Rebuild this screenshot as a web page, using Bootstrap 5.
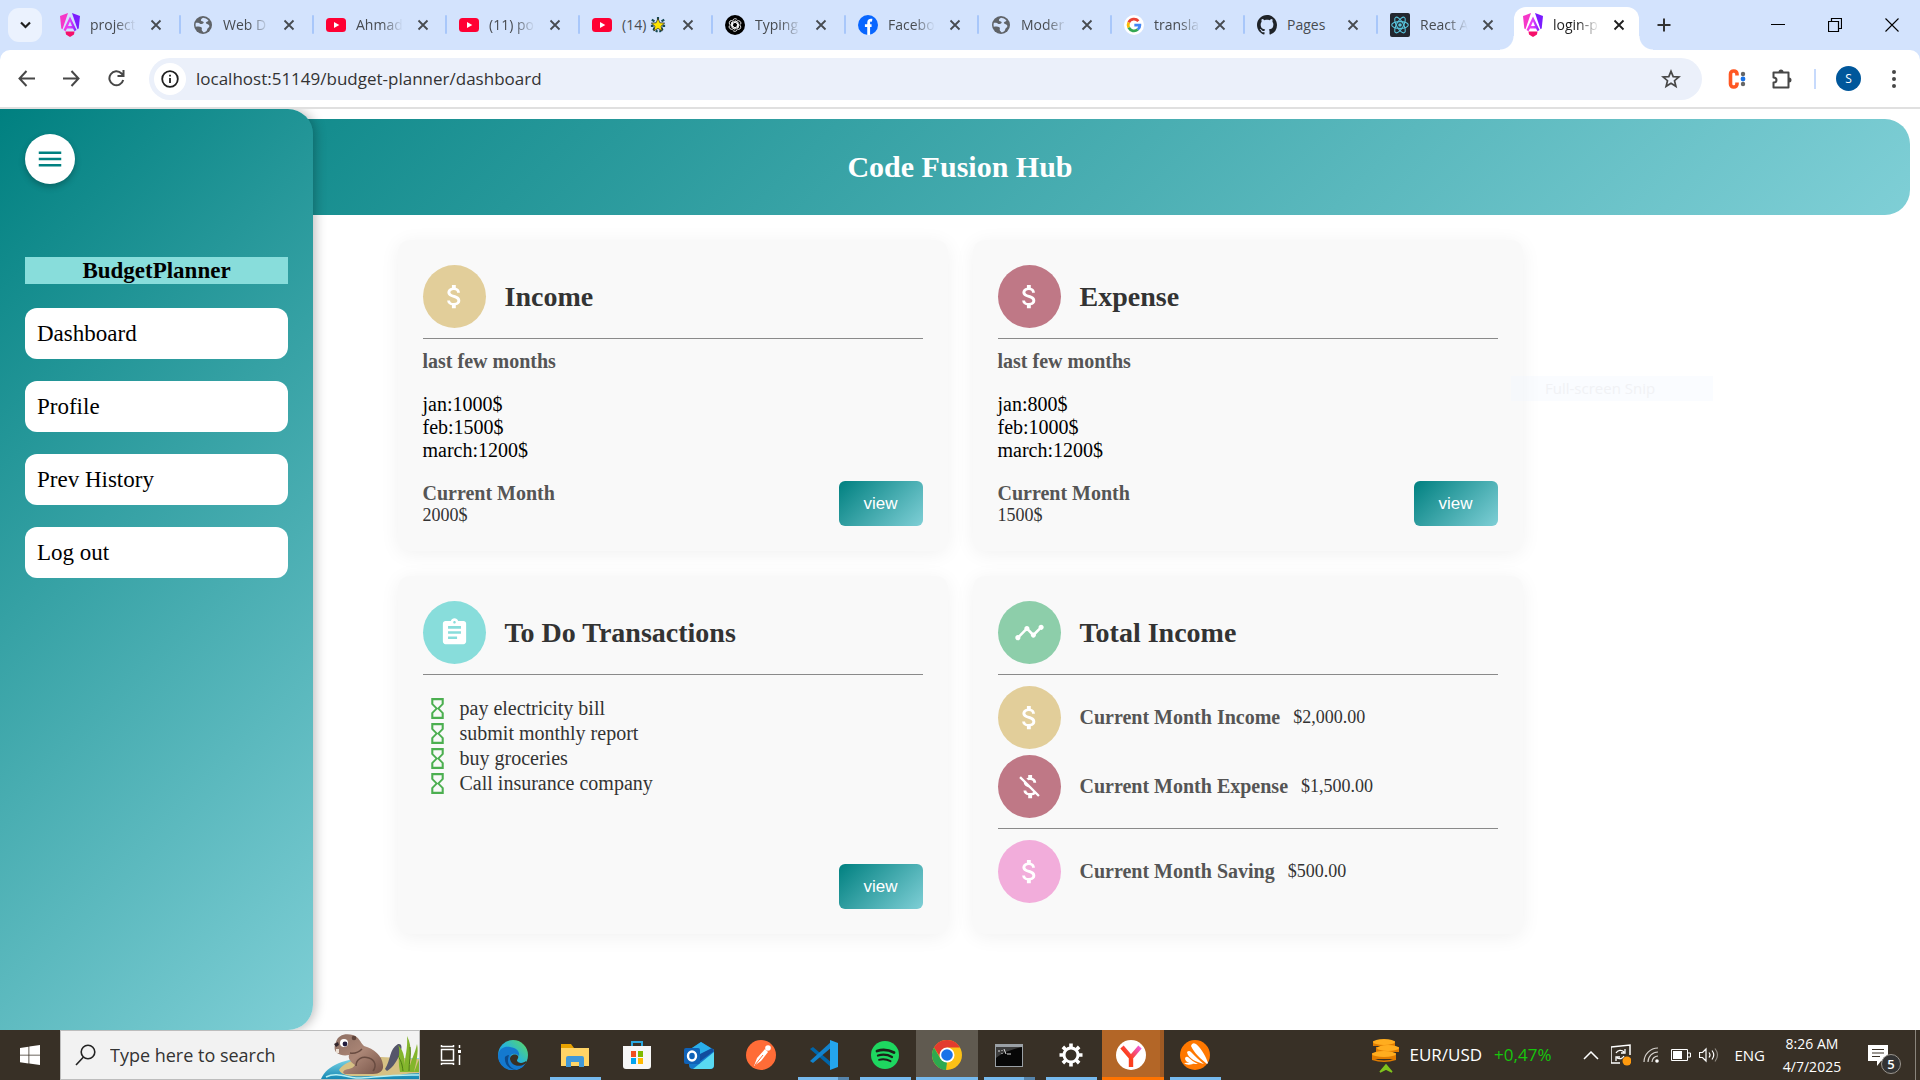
<!DOCTYPE html>
<html lang="en">
<head>
<meta charset="utf-8">
<meta name="viewport" content="width=device-width, initial-scale=1">
<title>Budget Planner dashboard</title>
<link href="https://cdn.jsdelivr.net/npm/bootstrap@5.3.0/dist/css/bootstrap.min.css" rel="stylesheet">
<style>
:root { --ui: "Open Sans", "Noto Sans", sans-serif; --page: "Liberation Serif", "Times New Roman", serif; --teal: linear-gradient(135deg, #008080, #7fcfd6); }
body { font-family: var(--ui); color: #333; background: #fff; min-height: 100vh; }
svg { display: block; flex: none; }
button { font-family: inherit; }
.plain { background: none; border: 0; padding: 0; display: flex; align-items: center; justify-content: center; color: inherit; flex: none; }

/* browser tab strip */
.tabstrip { background: #d3e3fd; height: 50px; }
.tabsearch { width: 34px; height: 34px; border-radius: 11px; background: #ebf2fe; margin: 0 5px 0 8px; align-self: flex-start; margin-top: 8px; }
.tab-item { width: 133px; height: 50px; padding: 0 14px 0 13px; gap: 10px; position: relative; color: #474b50; }
.tab-item::after { content: ""; position: absolute; right: -1px; top: 15px; width: 2px; height: 19px; background: #a8c7fa; border-radius: 1px; }
.tab-item.no-rule::after { display: none; }
.tab-item a { font-size: 14px; line-height: 20px; color: inherit; text-decoration: none; flex: 1 1 0; white-space: nowrap; display: flex; align-items: center; -webkit-mask-image: linear-gradient(90deg, #000 55%, transparent); mask-image: linear-gradient(90deg, #000 55%, transparent); }
.tab-item a.whole { -webkit-mask-image: none; mask-image: none; }
.tab-item .plain { width: 20px; height: 20px; }
.tab-item.current { color: #1f1f1f; }
.tab-item.current > * { z-index: 1; }
.tab-item.current::before { content: ""; position: absolute; left: 4px; right: 4px; top: 7px; bottom: 0; background: #fff; border-radius: 12px 12px 0 0; }
.tab-item.current::after { display: block; left: -10px; right: -10px; width: auto; top: 36px; height: 14px; border-radius: 0; background: radial-gradient(circle at 0 0, transparent 13px, #fff 14px) left / 14px 14px no-repeat, radial-gradient(circle at 100% 0, transparent 13px, #fff 14px) right / 14px 14px no-repeat; z-index: 0; }
.wincontrols .plain { width: 57px; height: 50px; color: #000; }

/* browser toolbar */
.toolbar-wrap { background: #d3e3fd; }
.toolbar { height: 59px; background: #fff; border-radius: 10px 10px 0 0; border-bottom: 2px solid #e0e0e0; color: #474747; }
.toolbar .plain { width: 45px; height: 36px; }
.omnibox { background: #ebf0fa; height: 42px; border-radius: 21px; padding: 0 20px 0 5px; margin-left: 10px; }
.omnibox input { background: none; border: 0; outline: 0; font-size: 17px; color: #333; padding: 0; }
.omnibox .site-info { width: 32px; height: 32px; border-radius: 50%; background: #fff; margin-right: 10px; }
.omnibox .star-btn { width: 22px; }
.tool-rule { margin: 0 10px; }
.avatar { width: 25px; height: 25px; border-radius: 50%; background: #00579b; color: #fff; font-size: 12px; }

/* page */
.app-grid { display: grid; grid-template-columns: 313px 1fr; grid-template-rows: auto 1fr; font-family: var(--page); position: relative; overflow: hidden; }
.side-panel { grid-column: 1; grid-row: 1 / 3; z-index: 2; background: var(--teal); border-radius: 0 25px 25px 0; padding: 25px; box-shadow: 2px 0 12px rgba(0,0,0,.28); }
.menu-btn { width: 50px; height: 50px; border-radius: 50%; background: #fff; color: #008080; box-shadow: 0 3px 6px rgba(0,0,0,.25); margin-bottom: 73px; }
.side-title { background: #88dddb; color: #000; font-size: 23px; line-height: 27px; font-weight: 700; text-align: center; margin: 0 0 24px; }
.side-link { display: block; background: #fff; border-radius: 12px; color: #000; font-size: 23px; line-height: 27px; padding: 12px; margin-bottom: 22px; text-decoration: none; }
.banner { grid-column: 1 / 3; grid-row: 1; margin: 10px 10px 0; height: 96px; background: var(--teal); border-radius: 25px; color: #fff; }
.banner h1 { font-size: 30px; line-height: 36px; font-weight: 700; margin: 0; }
.board { grid-column: 1 / 3; grid-row: 2; width: 100%; max-width: 1125px; margin: 25px auto; }
.board .row { --bs-gutter-x: 25px; --bs-gutter-y: 25px; }
.panel { background: #f9f9f9; border: 0; border-radius: 12px; padding: 25px; box-shadow: 0 3px 20px rgba(0,0,0,.06); color: #333; }
.panel-head { gap: 19px; }
.panel h2 { font-size: 28px; line-height: 32px; font-weight: 700; margin: 0; }
.panel h3 { font-size: 20px; line-height: 23px; font-weight: 700; margin: 0; color: #555; }
.panel hr { margin: 10px 0 11px; border-top: 1px solid #8a8a8a; opacity: 1; }
.disc { width: 63px; height: 63px; border-radius: 50%; color: #fff; flex: none; }
.gold { background: #e2ce9a; } .rose { background: #bf7886; } .aqua { background: #88dddb; } .leaf { background: #8dceaa; } .pink { background: #f2addb; }
.months { font-size: 20px; line-height: 23px; color: #000; margin: 20px 0 19px; }
.amount { font-size: 18px; line-height: 21px; }
.btn-view { background: var(--teal); color: #fff; border: 0; border-radius: 6px; width: 84px; height: 45px; padding: 0; font: 17px/20px "Liberation Sans", Arial, sans-serif; }
.btn-view:hover { color: #fff; }
.todo { font-size: 20px; line-height: 25px; margin: 21px 0 0; padding-left: 2px; }
.todo li { gap: 10px; }
.todo svg { color: #4caf50; }
.sum-row { gap: 19px; margin-bottom: 6px; }
.sum-row .figures { gap: 13px; }
.ghost-menu { position: absolute; right: 207px; top: 267px; width: 202px; height: 25px; background: rgba(240,245,255,.3); color: #f1f2f5; font: 15px/25px var(--ui); padding-left: 34px; z-index: 3; }

/* taskbar */
.taskbar { height: 50px; background: #383026; color: #fff; }
.taskbar .start { width: 60px; height: 50px; }
.find { width: 360px; background: #f2f2f2; border: 1px solid #bdbdbd; padding-left: 14px; gap: 13px; overflow: hidden; }
.find input { width: 180px; background: none; border: 0; outline: 0; padding: 0; font-size: 18px; color: #333; }
.find input::placeholder { color: #333; opacity: 1; }
.task { width: 62px; height: 50px; position: relative; }
.task.open::after { content: ""; position: absolute; left: 6px; right: 5px; bottom: 0; height: 3px; background: #76b9ed; }
.task.multi::after { background: linear-gradient(90deg, #76b9ed 40px, #5684ab 40px); }
.task.live { background: #605a50; } .task.live::after { left: 0; right: 0; }
.task.alert-app { background: #b36627; border-right: 4px solid #9e5a24; } .task.alert-app::after { left: 0; right: -4px; background: #ff7300; }
.tray { font-size: 17px; line-height: 20px; padding-right: 4px; }
.tray .up { color: #16c60c; }
.tray .plain { height: 50px; }
.lang { font-size: 15px; margin-left: 14px; }
.clock { font-size: 14px; line-height: 23px; width: 74px; text-align: center; }
.tray .notify { width: 68px; padding-right: 6px; position: relative; }
.notify-count { position: absolute; left: 34px; top: 24px; width: 20px; height: 20px; border-radius: 50%; border: 1px solid #9a958e; background: #333; font-size: 13px; line-height: 18px; font-weight: 600; }
.peek { width: 1px; height: 50px; background: #8a857c; }
</style>
<script src="https://cdn.jsdelivr.net/npm/bootstrap@5.3.0/dist/js/bootstrap.bundle.min.js"></script>
</head>
<body class="d-flex flex-column">

<svg width="0" height="0" class="position-absolute" aria-hidden="true">
  <defs>
    <linearGradient id="ngA" x1="0" y1="0" x2="1" y2="0"><stop offset="0" stop-color="#f637e3"/><stop offset=".5" stop-color="#e040fb"/><stop offset="1" stop-color="#7b1cff"/></linearGradient>
    <linearGradient id="edgeA" x1="0" y1="1" x2="1" y2="0"><stop offset="0" stop-color="#0f6fd0"/><stop offset=".5" stop-color="#26b4dc"/><stop offset="1" stop-color="#5fdc5a"/></linearGradient>
    <linearGradient id="water" x1="0" y1="0" x2="0" y2="1"><stop offset="0" stop-color="#7fd8e8"/><stop offset="1" stop-color="#1588b4"/></linearGradient>
    <linearGradient id="fur" x1="0" y1="0" x2="1" y2="1"><stop offset="0" stop-color="#8d6f63"/><stop offset=".5" stop-color="#ab8676"/><stop offset="1" stop-color="#765347"/></linearGradient>
    <linearGradient id="yandex" x1="0" y1="1" x2="1" y2="0"><stop offset=".45" stop-color="#fc3f1d"/><stop offset="1" stop-color="#f05ad8"/></linearGradient>
    <symbol id="i-x" viewBox="0 0 12 12"><path d="M1.5 1.5l9 9m0-9l-9 9" stroke="currentColor" stroke-width="1.8" fill="none"/></symbol>
    <symbol id="i-angular" viewBox="0 0 20 24"><path d="M8 0L0 3l1.300 12.500 1.200.7z" fill="#f637c8"/><path d="M12 0l8 3-1.300 12.500-1.200.7z" fill="#7b1cff"/><path d="M10 3.500L3.500 17l2 1.200L7 15.500h6l1.500 2.700 2-1.200zM10 8.500l2 4.500H8z" fill="url(#ngA)"/><path d="M5.500 18.500h9l-.5 3L10 24l-4-2.500z" fill="#f5106b"/></symbol>
    <symbol id="i-globe" viewBox="0 0 24 24"><circle cx="12" cy="12" r="10.800" fill="#5f6368"/><path d="M12 3.200c-1 1.200-2.700 1.300-2.500 3 .2 1.800 2.500.8 3.200 2.200.6 1.300-.8 2.300-2.400 2.400-2 .2-2.300-1.600-4.300-1.600H3.400A9 9 0 0 0 3.300 14c2.600-.3 5.200-.5 6.700.6 1.600 1.200-.2 2.600.7 4 .5.800 1.300 1 1.500 2.200 3.800-.2 4.500-2.200 5-4 .5-1.600 2-1.400 2.400-3 .4-1.800-1.500-2.800-3.200-3.300-1.500-.4-1.300-2 .2-2.400 1-.3 1.700-.2 1.800-1.700A9 9 0 0 0 12 3.200z" fill="#d3e3fd"/></symbol>
    <symbol id="i-yt" viewBox="0 0 20 14"><rect width="20" height="14" rx="3.500" fill="#f03"/><path d="M8 4l5.300 3L8 10z" fill="#fff"/></symbol>
    <symbol id="i-gpt" viewBox="0 0 24 24"><circle cx="12" cy="12" r="12" fill="#000"/><g fill="none" stroke="#fff" stroke-width="1"><g id="gp"><path d="M9.200 12V7.500a3 3 0 0 1 5.600-1.600M9.200 10.200l4-2.300 3.800 2.200"/></g><use href="#gp" transform="rotate(60 12 12)"/><use href="#gp" transform="rotate(120 12 12)"/><use href="#gp" transform="rotate(180 12 12)"/><use href="#gp" transform="rotate(240 12 12)"/><use href="#gp" transform="rotate(300 12 12)"/></g></symbol>
    <symbol id="i-fb" viewBox="0 0 24 24"><circle cx="12" cy="12" r="12" fill="#0866ff"/><path d="M17 6.300c-3.200-.6-4.200.6-4.200 3V24M8.300 12.800h8" fill="none" stroke="#fff" stroke-width="3.400"/></symbol>
    <symbol id="i-google" viewBox="0 0 24 24"><circle cx="12" cy="12" r="12" fill="#fff"/><g fill="none" stroke-width="3.400"><path d="M17.300 7.300A7 7 0 0 0 5.700 9" stroke="#ea4335"/><path d="M5.700 9a7 7 0 0 0 0 6.200" stroke="#fbbc05"/><path d="M5.700 15.200a7 7 0 0 0 10.800 2.200" stroke="#34a853"/><path d="M16.500 17.400A6.500 6.500 0 0 0 19 12.200h-6.600" stroke="#4285f4"/></g></symbol>
    <symbol id="i-github" viewBox="0 0 16 16"><path fill="#1f2328" d="M8 0C3.580 0 0 3.580 0 8c0 3.540 2.290 6.530 5.470 7.590.4.070.55-.17.55-.38 0-.19-.01-.82-.01-1.490-2.010.37-2.530-.49-2.690-.94-.09-.23-.48-.94-.82-1.130-.28-.15-.68-.52-.01-.53.63-.01 1.080.58 1.230.82.72 1.210 1.870.87 2.330.66.070-.52.280-.87.510-1.070-1.780-.2-3.640-.89-3.640-3.950 0-.87.310-1.590.820-2.150-.08-.2-.36-1.020.080-2.120 0 0 .67-.21 2.200.82.640-.18 1.320-.27 2-.27.680 0 1.360.090 2 .27 1.530-1.040 2.200-.82 2.200-.82.440 1.100.16 1.920.080 2.120.510.560.820 1.270.820 2.150 0 3.070-1.870 3.750-3.650 3.950.290.250.540.730.540 1.480 0 1.070-.01 1.930-.01 2.200 0 .21.150.46.550.38A8.012 8.012 0 0 0 16 8c0-4.420-3.580-8-8-8z"/></symbol>
    <symbol id="i-react" viewBox="0 0 20 24"><rect width="20" height="24" rx="2" fill="#23272f"/><g fill="none" stroke="#58c4dc" stroke-width="1.100"><ellipse cx="10" cy="12" rx="8.300" ry="3.400"/><ellipse cx="10" cy="12" rx="8.800" ry="3.400" transform="rotate(60 10 12)"/><ellipse cx="10" cy="12" rx="8.800" ry="3.400" transform="rotate(120 10 12)"/></g><circle cx="10" cy="12" r="1.800" fill="#58c4dc"/></symbol>
    <symbol id="m-dollar" viewBox="0 0 24 24"><path fill="currentColor" d="M11.8 10.900c-2.270-.59-3-1.200-3-2.150 0-1.090 1.010-1.850 2.700-1.850 1.780 0 2.440.85 2.500 2.100h2.210c-.07-1.720-1.120-3.300-3.210-3.810V3h-3v2.160c-1.940.42-3.500 1.680-3.500 3.610 0 2.310 1.910 3.460 4.700 4.130 2.500.6 3 1.480 3 2.410 0 .69-.49 1.790-2.700 1.790-2.060 0-2.870-.92-2.980-2.100h-2.200c.12 2.190 1.760 3.420 3.680 3.830V21h3v-2.150c1.950-.37 3.500-1.500 3.500-3.550 0-2.840-2.430-3.810-4.700-4.400z"/></symbol>
    <symbol id="m-dollar-off" viewBox="0 0 24 24"><path fill="currentColor" d="M12.500 6.900c1.780 0 2.440.85 2.500 2.100h2.210c-.07-1.720-1.120-3.300-3.210-3.810V3h-3v2.160c-.53.12-1.030.3-1.480.54l1.470 1.470c.41-.17.91-.27 1.510-.27zM5.330 4.060L4.060 5.330 7.500 8.770c0 2.080 1.560 3.210 3.910 3.910l3.510 3.510c-.34.48-1.050.91-2.420.91-2.060 0-2.870-.92-2.980-2.100h-2.200c.12 2.190 1.760 3.420 3.680 3.830V21h3v-2.150c.96-.18 1.820-.55 2.450-1.120l2.220 2.220 1.270-1.270L5.330 4.060z"/></symbol>
    <symbol id="m-clip" viewBox="0 0 24 24"><path fill="currentColor" d="M19 3h-4.180C14.400 1.840 13.300 1 12 1c-1.300 0-2.400.84-2.820 2H5c-1.100 0-2 .9-2 2v14c0 1.100.9 2 2 2h14c1.100 0 2-.9 2-2V5c0-1.100-.9-2-2-2zm-7 0c.55 0 1 .45 1 1s-.45 1-1 1-1-.45-1-1 .45-1 1-1zm2 14H7v-2h7v2zm3-4H7v-2h10v2zm0-4H7V7h10v2z"/></symbol>
    <symbol id="m-line" viewBox="0 0 24 24"><path fill="currentColor" d="M23 8c0 1.100-.9 2-2 2-.18 0-.35-.02-.51-.07l-3.560 3.550c.05.16.07.34.07.52 0 1.100-.9 2-2 2s-2-.9-2-2c0-.18.02-.36.07-.52l-2.550-2.550c-.16.05-.34.07-.52.07s-.36-.02-.52-.07l-4.550 4.560c.05.16.07.33.07.51 0 1.100-.9 2-2 2s-2-.9-2-2 .9-2 2-2c.18 0 .35.02.51.07l4.560-4.550C8.020 9.360 8 9.180 8 9c0-1.100.9-2 2-2s2 .9 2 2c0 .18-.02.36-.07.52l2.550 2.550c.16-.05.34-.07.52-.07s.36.02.52.07l3.550-3.560C19.020 8.350 19 8.180 19 8c0-1.100.9-2 2-2s2 .9 2 2z"/></symbol>
    <symbol id="m-hour" viewBox="0 0 24 24"><path fill="currentColor" d="M6 2v6h.01L6 8.010 10 12l-4 4 .01.01H6V22h12v-5.990h-.01L18 16l-4-4 4-3.990-.01-.01H18V2H6zm10 14.500V20H8v-3.500l4-4 4 4zm-4-5l-4-4V4h8v3.500l-4 4z"/></symbol>
  </defs>
</svg>

<header>
  <nav class="tabstrip d-flex align-items-center" aria-label="Browser tabs">
    <button class="plain tabsearch" aria-label="Search tabs"><svg width="11" height="8" viewBox="0 0 11 8"><path d="M1 1.500l4.500 4.500L10 1.500" fill="none" stroke="#1f1f1f" stroke-width="2.200"/></svg></button>
    <div class="tab-item d-flex align-items-center"><svg width="20" height="24"><use href="#i-angular"/></svg><a href="#">project</a><button class="plain" aria-label="Close tab"><svg width="12" height="12"><use href="#i-x"/></svg></button></div>
    <div class="tab-item d-flex align-items-center"><svg width="20" height="20"><use href="#i-globe"/></svg><a href="#">Web D</a><button class="plain" aria-label="Close tab"><svg width="12" height="12"><use href="#i-x"/></svg></button></div>
    <div class="tab-item d-flex align-items-center"><svg width="20" height="14"><use href="#i-yt"/></svg><a href="#">Ahmad</a><button class="plain" aria-label="Close tab"><svg width="12" height="12"><use href="#i-x"/></svg></button></div>
    <div class="tab-item d-flex align-items-center"><svg width="20" height="14"><use href="#i-yt"/></svg><a href="#">(11) po</a><button class="plain" aria-label="Close tab"><svg width="12" height="12"><use href="#i-x"/></svg></button></div>
    <div class="tab-item d-flex align-items-center"><svg width="20" height="14"><use href="#i-yt"/></svg><a href="#" class="whole">(14)<svg class="ms-1" width="16" height="16" viewBox="0 0 18 18"><path d="M2 3l3 2M16 3l-3 2M1 10h3m10 0h3M9 0v3M4 15l1-3m9 3l-1-3M7 17l1-2m4 2l-1-2" stroke="#154b55" stroke-width="2.400"/><path d="M9 1.500l2.100 5 5.400.4-4.100 3.500 1.300 5.300L9 12.800l-4.700 2.900 1.300-5.300L1.500 6.900l5.400-.4z" fill="#ffe500" stroke="#222" stroke-width=".8"/></svg></a><button class="plain" aria-label="Close tab"><svg width="12" height="12"><use href="#i-x"/></svg></button></div>
    <div class="tab-item d-flex align-items-center"><svg width="20" height="20"><use href="#i-gpt"/></svg><a href="#">Typing</a><button class="plain" aria-label="Close tab"><svg width="12" height="12"><use href="#i-x"/></svg></button></div>
    <div class="tab-item d-flex align-items-center"><svg width="20" height="20"><use href="#i-fb"/></svg><a href="#">Facebo</a><button class="plain" aria-label="Close tab"><svg width="12" height="12"><use href="#i-x"/></svg></button></div>
    <div class="tab-item d-flex align-items-center"><svg width="20" height="20"><use href="#i-globe"/></svg><a href="#">Moder</a><button class="plain" aria-label="Close tab"><svg width="12" height="12"><use href="#i-x"/></svg></button></div>
    <div class="tab-item d-flex align-items-center"><svg width="20" height="20"><use href="#i-google"/></svg><a href="#">transla</a><button class="plain" aria-label="Close tab"><svg width="12" height="12"><use href="#i-x"/></svg></button></div>
    <div class="tab-item d-flex align-items-center"><svg width="20" height="20"><use href="#i-github"/></svg><a href="#" class="whole">Pages</a><button class="plain" aria-label="Close tab"><svg width="12" height="12"><use href="#i-x"/></svg></button></div>
    <div class="tab-item no-rule d-flex align-items-center"><svg width="20" height="24"><use href="#i-react"/></svg><a href="#">React A</a><button class="plain" aria-label="Close tab"><svg width="12" height="12"><use href="#i-x"/></svg></button></div>
    <div class="tab-item current d-flex align-items-center"><svg width="20" height="24"><use href="#i-angular"/></svg><a href="#">login-p</a><button class="plain" aria-label="Close tab"><svg width="12" height="12"><use href="#i-x"/></svg></button></div>
    <button class="plain ms-2" aria-label="New tab"><svg width="26" height="26" viewBox="0 0 26 26"><path d="M13 6.500v13M6.500 13h13" stroke="#333" stroke-width="2"/></svg></button>
    <div class="wincontrols d-flex ms-auto">
      <button class="plain" aria-label="Minimize"><svg width="14" height="14" viewBox="0 0 14 14"><path d="M0 6.500h14" stroke="currentColor"/></svg></button>
      <button class="plain" aria-label="Restore"><svg width="14" height="14" viewBox="0 0 14 14"><path d="M.5 3.500h10v10H.5zM3.500 3V.5h10v10H11" fill="none" stroke="currentColor" stroke-width="1.200"/></svg></button>
      <button class="plain" aria-label="Close"><svg width="14" height="14" viewBox="0 0 14 14"><path d="M.5.5l13 13m0-13l-13 13" stroke="currentColor" stroke-width="1.100"/></svg></button>
    </div>
  </nav>
  <div class="toolbar-wrap">
    <div class="toolbar d-flex align-items-center">
      <div class="d-flex ps-1">
        <button class="plain" aria-label="Back"><svg width="17" height="17" viewBox="0 0 17 17"><path d="M8.500 1L1.500 8.500l7 7.500M1.500 8.500H17" fill="none" stroke="currentColor" stroke-width="2"/></svg></button>
        <button class="plain" aria-label="Forward"><svg width="17" height="17" viewBox="0 0 17 17"><path d="M8.500 1l7 7.500-7 7.500M15.500 8.500H0" fill="none" stroke="currentColor" stroke-width="2"/></svg></button>
        <button class="plain" aria-label="Reload"><svg width="17" height="17" viewBox="0 0 17 17"><path d="M15.200 10A7 7 0 1 1 13.500 3.500L15 5.500M15.500 0v6h-6" fill="none" stroke="currentColor" stroke-width="2"/></svg></button>
      </div>
      <div class="omnibox d-flex align-items-center flex-grow-1">
        <button class="plain site-info" aria-label="Site information"><svg width="18" height="18" viewBox="0 0 18 18"><circle cx="9" cy="9" r="7.800" fill="none" stroke="#1f1f1f" stroke-width="1.800"/><path d="M9 8v5M9 4.800v1.800" stroke="#1f1f1f" stroke-width="1.800"/></svg></button>
        <input class="flex-grow-1" type="text" aria-label="Address" value="localhost:51149/budget-planner/dashboard">
        <button class="plain star-btn" aria-label="Bookmark"><svg width="20" height="20" viewBox="0 0 20 20"><path d="M10 2.300l2.200 5.300 5.700.4-4.400 3.700 1.400 5.600L10 14.200l-4.900 3.100 1.400-5.600L2.100 8l5.700-.4z" fill="none" stroke="currentColor" stroke-width="1.700"/></svg></button>
      </div>
      <div class="d-flex align-items-center ps-2 pe-1 ms-1">
        <button class="plain" aria-label="Extension"><svg width="20" height="20" viewBox="0 0 20 20"><path d="M10 6.500V5a3 3 0 0 0-3-3h-.5a3 3 0 0 0-3 3v10a3 3 0 0 0 3 3H7a3 3 0 0 0 3-3v-1.500" fill="none" stroke="#ff5722" stroke-width="3.600"/><circle cx="16" cy="5" r="2.200" fill="#666"/><circle cx="16" cy="10" r="2.400" fill="#1a73e8"/><circle cx="16" cy="15" r="2.200" fill="#666"/></svg></button>
        <button class="plain" aria-label="Extensions"><svg width="22" height="22" viewBox="0 0 22 22"><path d="M2.500 4.500h15v15h-15v-5c2 0 3-1 3-2.500s-1-2.500-3-2.500z" fill="none" stroke="currentColor" stroke-width="2" stroke-linejoin="round"/><path d="M7.500 4a2.500 2.500 0 0 1 5 0zM18 9.500a2.500 2.500 0 0 1 0 5z" fill="currentColor"/></svg></button>
        <svg class="tool-rule" width="2" height="20"><rect width="2" height="20" fill="#c7dafc"/></svg>
        <button class="plain" aria-label="Profile"><span class="avatar d-flex align-items-center justify-content-center">S</span></button>
        <button class="plain" aria-label="Menu"><svg width="4" height="18" viewBox="0 0 4 18"><g fill="currentColor"><circle cx="2" cy="2" r="2"/><circle cx="2" cy="9" r="2"/><circle cx="2" cy="16" r="2"/></g></svg></button>
      </div>
    </div>
  </div>
</header>

<main class="app-grid flex-grow-1">
  <aside class="side-panel">
    <button class="plain menu-btn" aria-label="Toggle menu"><svg width="30" height="30" viewBox="0 0 24 24"><path fill="currentColor" d="M3 18h18v-2H3v2zm0-5h18v-2H3v2zm0-7v2h18V6H3z"/></svg></button>
    <h3 class="side-title">BudgetPlanner</h3>
    <nav>
      <a class="side-link" href="#">Dashboard</a>
      <a class="side-link" href="#">Profile</a>
      <a class="side-link" href="#">Prev History</a>
      <a class="side-link" href="#">Log out</a>
    </nav>
  </aside>
  <div class="banner d-flex align-items-center justify-content-center"><h1>Code Fusion Hub</h1></div>
  <div class="board">
    <div class="row row-cols-2">
      <div class="col">
        <section class="card panel h-100">
          <div class="panel-head d-flex align-items-center"><span class="disc gold d-flex align-items-center justify-content-center"><svg width="31" height="31"><use href="#m-dollar"/></svg></span><h2>Income</h2></div>
          <hr>
          <h3>last few months</h3>
          <div class="months">jan:1000$<br>feb:1500$<br>march:1200$</div>
          <div class="d-flex justify-content-between align-items-end mt-auto"><div><h3>Current Month</h3><div class="amount">2000$</div></div><button class="btn btn-view">view</button></div>
        </section>
      </div>
      <div class="col">
        <section class="card panel h-100">
          <div class="panel-head d-flex align-items-center"><span class="disc rose d-flex align-items-center justify-content-center"><svg width="31" height="31"><use href="#m-dollar"/></svg></span><h2>Expense</h2></div>
          <hr>
          <h3>last few months</h3>
          <div class="months">jan:800$<br>feb:1000$<br>march:1200$</div>
          <div class="d-flex justify-content-between align-items-end mt-auto"><div><h3>Current Month</h3><div class="amount">1500$</div></div><button class="btn btn-view">view</button></div>
        </section>
      </div>
      <div class="col">
        <section class="card panel h-100">
          <div class="panel-head d-flex align-items-center"><span class="disc aqua d-flex align-items-center justify-content-center"><svg width="31" height="31"><use href="#m-clip"/></svg></span><h2>To Do Transactions</h2></div>
          <hr class="mb-0">
          <ul class="todo list-unstyled">
            <li class="d-flex"><svg width="25" height="25"><use href="#m-hour"/></svg>pay electricity bill</li>
            <li class="d-flex"><svg width="25" height="25"><use href="#m-hour"/></svg>submit monthly report</li>
            <li class="d-flex"><svg width="25" height="25"><use href="#m-hour"/></svg>buy groceries</li>
            <li class="d-flex"><svg width="25" height="25"><use href="#m-hour"/></svg>Call insurance company</li>
          </ul>
          <button class="btn btn-view mt-auto ms-auto">view</button>
        </section>
      </div>
      <div class="col">
        <section class="card panel h-100 d-block">
          <div class="panel-head d-flex align-items-center"><span class="disc leaf d-flex align-items-center justify-content-center"><svg width="31" height="31"><use href="#m-line"/></svg></span><h2>Total Income</h2></div>
          <hr>
          <div class="sum-row d-flex align-items-center"><span class="disc gold d-flex align-items-center justify-content-center"><svg width="31" height="31"><use href="#m-dollar"/></svg></span><div class="figures d-flex align-items-center"><h3>Current Month Income</h3><span class="amount">$2,000.00</span></div></div>
          <div class="sum-row d-flex align-items-center"><span class="disc rose d-flex align-items-center justify-content-center"><svg width="31" height="31"><use href="#m-dollar-off"/></svg></span><div class="figures d-flex align-items-center"><h3>Current Month Expense</h3><span class="amount">$1,500.00</span></div></div>
          <hr>
          <div class="sum-row d-flex align-items-center"><span class="disc pink d-flex align-items-center justify-content-center"><svg width="31" height="31"><use href="#m-dollar"/></svg></span><div class="figures d-flex align-items-center"><h3>Current Month Saving</h3><span class="amount">$500.00</span></div></div>
        </section>
      </div>
    </div>
  </div>
  <div class="ghost-menu">Full-screen Snip</div>
</main>

<footer class="taskbar d-flex align-items-stretch">
  <button class="plain start" aria-label="Start"><svg width="20" height="20" viewBox="0 0 20 20"><path fill="#fff" d="M0 3l8.500-1.300v8H0zM9.300 1.500L20 0v9.700H9.300zM0 10.400h8.500v8L0 17.200zM9.300 10.400H20V20L9.300 18.500z"/></svg></button>
  <div class="find d-flex align-items-center">
    <svg width="22" height="22" viewBox="0 0 22 22"><circle cx="13" cy="8" r="6.800" fill="none" stroke="#222" stroke-width="1.600"/><path d="M8.500 13L1 21" stroke="#222" stroke-width="1.600"/></svg>
    <input type="text" aria-label="Search" placeholder="Type here to search">
    <svg class="ms-auto" width="98" height="48" viewBox="0 0 98 48">
      <path d="M0 48C6 34 24 27 50 27h48v21z" fill="url(#water)"/>
      <path d="M18 39C22 31 40 25 60 26l38 2v14c-16 0-20 4-40 3-22 0-36 2-40-6z" fill="#d6c184"/>
      <path d="M64 38c6-9 4-20 13-25 5-1 4 6 1 12-3 7-8 13-12 15z" fill="#55566a"/>
      <path d="M15 11C17 4 24 2 32 4c6 2 7 7 11 11 10 3 18 9 19 19 1 6-4 9-10 9H24c-4-1-1-5 4-5 3-1 5-2 6-4-5-3-7-7-6-10-5 1-9 0-12-2-3-2-3-7-1-11z" fill="url(#fur)"/>
      <path d="M29 22c6 1 9-1 12-4M35 35c0-7 6-10 13-8 6 2 8 8 4 13" fill="none" stroke="#684b40" stroke-width="1.500"/>
      <path d="M15 18h3v4h-3z" fill="#ede1d5"/>
      <circle cx="23" cy="12" r="4" fill="#fff"/><circle cx="24" cy="13" r="2.400" fill="#211b3c"/><circle cx="33" cy="7" r="2.300" fill="#5e443b"/><path d="M13 13l4-2 1 3-3 2z" fill="#33262c"/>
      <path d="M79 41C76 26 80 20 77 14c7 7 7 16 6 24 1-13 4-21 3-33 6 11 3 24 2 34 2-11 6-16 8-26 2 8-1 19-3 28 2-4 3-9 5-12v12H79z" fill="#83b52c"/>
      <path d="M82 40c-1-8-2-10-5-15M88 40c0-9 2-16 1-24" stroke="#4f7c15" fill="none"/>
      <path d="M5 46c10-5 20 0 30 1s30-4 63-3" fill="none" stroke="#b6f0f4" stroke-width="1.500"/>
    </svg>
  </div>
  <button class="plain task" aria-label="Task view"><svg width="22" height="24" viewBox="0 0 22 24"><g fill="none" stroke="#fff" stroke-width="1.500"><path d="M1.500 6.500h12v11h-12zM1.500 2v1.500h12V2M1.500 22v-1.500h12V22M19.500 2v3M19.500 12v10"/></g><rect x="18" y="7" width="3" height="3" fill="#fff"/></svg></button>
  <button class="plain task" aria-label="Edge"><svg width="30" height="30" viewBox="0 0 30 30"><circle cx="15" cy="15" r="15" fill="url(#edgeA)"/><path d="M0 16C1 8 7 6 12 7c7 1 10 5 9 9-4-4-10-2-9 3 1 6 9 8 16 4A15 15 0 0 1 0 16z" fill="#1479cf"/><path d="M12 19c0-4 5-6 8-3 1 2-1 3-1 5 2 3 7 2 9 0 1 1 0 2-1 3-7 4-14 1-15-5z" fill="#383026"/><path d="M7 17c-1 7 4 13 12 13-7-1-11-7-8-15-2 0-3 1-4 2z" fill="#0c4a8c"/></svg></button>
  <button class="plain task open" aria-label="File Explorer"><svg width="28" height="24" viewBox="0 0 28 24"><path d="M0 1h10l3 4h14v6H0z" fill="#e8a200"/><path d="M0 5h28v18H0z" fill="#ffd466"/><path d="M5 24v-9q0-2 2-2h14q2 0 2 2v9h-5v-5h-8v5z" fill="#4098d8"/></svg></button>
  <button class="plain task" aria-label="Microsoft Store"><svg width="30" height="30" viewBox="0 0 30 30"><path d="M10 7V2h10v5" fill="none" stroke="#29a8e0" stroke-width="2"/><path d="M1 6h28v20q0 3-3 3H4q-3 0-3-3z" fill="#f7f7f7"/><path d="M9 11h5v6H9z" fill="#f25022"/><path d="M16 11h5v6h-5z" fill="#7fba00"/><path d="M9 18h5v6H9z" fill="#00a4ef"/><path d="M16 18h5v6h-5z" fill="#ffb900"/></svg></button>
  <button class="plain task" aria-label="Outlook"><svg width="30" height="28" viewBox="0 0 30 28"><path d="M5 9L17 1l13 8v15q0 4-4 4H9q-4 0-4-4z" fill="#1479cc"/><path d="M5 9L17 1l13 8-14 10z" fill="#2aaeea"/><path d="M30 11v13q0 4-4 4H9z" fill="#59d9f2"/><path d="M14 14L28 7l2 3-15 11z" fill="#114c9e"/><rect y="7" width="16" height="16" rx="2" fill="#0f62b8"/><ellipse cx="8" cy="15" rx="4" ry="4.500" fill="none" stroke="#fff" stroke-width="2.400"/></svg></button>
  <button class="plain task" aria-label="Postman"><svg width="30" height="30" viewBox="0 0 30 30"><circle cx="15" cy="15" r="15" fill="#ff6c37"/><circle cx="22" cy="8" r="2.800" fill="#fff"/><path d="M19 9l3 3-7 9-7 5 3-8z" fill="#fff"/><path d="M9 25l8-10" stroke="#ff6c37"/></svg></button>
  <button class="plain task open multi" aria-label="Visual Studio Code"><svg width="30" height="30" viewBox="0 0 30 30"><path d="M2 9l3-2 19 16v5z" fill="#0065a9"/><path d="M2 21l3 2L24 7V1z" fill="#1283cd"/><path d="M22 0l8 3v24l-8 3z" fill="#24a5ee"/></svg></button>
  <button class="plain task open" aria-label="Spotify"><svg width="28" height="28" viewBox="0 0 28 28"><circle cx="14" cy="14" r="14" fill="#1ed760"/><g fill="none" stroke="#1d2018" stroke-linecap="round"><path d="M6 10c6-2 12-1 17 1.500" stroke-width="2.800"/><path d="M7 14.500c5-1.500 10-.8 14 1.500" stroke-width="2.300"/><path d="M8 18.800c4-1 8-.5 11.500 1.400" stroke-width="1.900"/></g></svg></button>
  <button class="plain task open live" aria-label="Chrome"><svg width="30" height="30" viewBox="0 0 30 30"><circle cx="15" cy="15" r="15" fill="#fbc116"/><path d="M2 7.500A15 15 0 0 1 28 7.500H15L9 18.500z" fill="#e33b2e"/><path d="M2 7.500l6.500 11.300L15 22.500 14 30A15 15 0 0 1 2 7.500z" fill="#2da94f"/><circle cx="15" cy="15" r="7.500" fill="#fff"/><circle cx="15" cy="15" r="5.800" fill="#1a73e8"/></svg></button>
  <button class="plain task open multi" aria-label="Command Prompt"><svg width="28" height="23" viewBox="0 0 28 23"><rect width="28" height="23" fill="#9aa0a5"/><rect x="1" y="3" width="26" height="19" fill="#070707"/><path d="M1 3h26c-8 2-19 5-26 11z" fill="#3c3c3c"/><path d="M3 7h2M7 6v1m0 2v1M9 5l2 5M12 10h4" stroke="#ddd" fill="none"/></svg></button>
  <button class="plain task open" aria-label="Settings"><svg width="24" height="24" viewBox="0 0 24 24"><circle cx="12" cy="12" r="7" fill="none" stroke="#fff" stroke-width="3"/><g stroke="#fff" stroke-width="3.600"><path id="cog" d="M12 .5v4M12 19.500v4"/><use href="#cog" transform="rotate(45 12 12)"/><use href="#cog" transform="rotate(90 12 12)"/><use href="#cog" transform="rotate(135 12 12)"/></g></svg></button>
  <button class="plain task open alert-app" aria-label="Yandex Browser"><svg width="30" height="30" viewBox="0 0 30 30"><circle cx="15" cy="15" r="15" fill="#fff"/><path d="M6 7l9 10.500V27M15 17.500L24 7" fill="none" stroke="url(#yandex)" stroke-width="4.400"/></svg></button>
  <button class="plain task open" aria-label="Avast"><svg width="30" height="30" viewBox="0 0 30 30"><circle cx="15" cy="15" r="15" fill="#ff7800"/><path d="M11 6q1-4 5-2c6 5 10 13 12 19l-1 1C21 19 14 13 11 6zM7 12q2-2 4 0c5 5 8 8 13 12-7-2-16-5-17-12zM5 19q0-3 3-2c3 3 6 5 10 7-6 0-12-1-13-5zM4 23q5-1 9 1-6 2-9-1z" fill="#fff"/></svg></button>

  <div class="tray d-flex align-items-center ms-auto">
    <svg class="me-2" width="30" height="36" viewBox="0 0 30 36"><g fill="#e07c00"><path d="M2 4h22v5H2zM5 10h23v5H5zM1 16h24v6H1z"/></g><g fill="#ffad1f"><ellipse cx="13" cy="5" rx="11" ry="3"/><ellipse cx="17" cy="11" rx="11" ry="3"/><ellipse cx="13" cy="17" rx="12" ry="3"/></g><path d="M1 21q12 5 24 0v2q-12 4-24 0z" fill="#e07c00"/><path d="M9 35l6-7 6 7-6-3z" fill="#7fc31c" stroke="#7fc31c" stroke-width="1.500"/></svg>
    <span class="me-2">EUR/USD</span><span class="up ms-1 me-4">+0,47%</span>
    <button class="plain ms-2" aria-label="Show hidden icons"><svg width="16" height="9" viewBox="0 0 16 9"><path d="M1 8l7-7 7 7" fill="none" stroke="#fff" stroke-width="1.500"/></svg></button>
    <svg class="ms-2 me-1 px-1" width="28" height="22" viewBox="0 0 20 22"><path d="M9 19H0V3l19-2v10" fill="none" stroke="#fff" stroke-width="1.500"/><path d="M5 9a5 5 0 0 1 8-1m1-3v4h-4M13 12a5 5 0 0 1-7 2M5 17v-4h4" fill="none" stroke="#fff" stroke-width="1.300"/><circle cx="16" cy="17" r="4.500" fill="#ff9a0e"/></svg>
    <svg class="ms-1 me-2" width="16" height="16" viewBox="0 0 16 16"><g fill="none" stroke="#d8d4cf" stroke-width="1.200"><path d="M1 15A14 14 0 0 1 15 1M5 15A10 10 0 0 1 15 5M9 15a6 6 0 0 1 6-6"/></g><circle cx="14" cy="14" r="1.800" fill="#fff"/></svg>
    <svg class="ms-1 me-1" width="20" height="12" viewBox="0 0 20 12"><path d="M.5.5h16v11H.5zM17 4h2.500v4H17" fill="none" stroke="#fff"/><path d="M2 2h9v8H2z" fill="#fff"/></svg>
    <svg class="ms-1" width="21" height="16" viewBox="0 0 21 16"><path d="M.5 5.500h3L7 2v12l-3.500-3.500h-3zM10 5.500q2 2.500 0 5M13 3.500q3.500 4.500 0 9" fill="none" stroke="#fff" stroke-width="1.200"/><path d="M16 1.500q5 6.500 0 13" fill="none" stroke="#8f8a83" stroke-width="1.200"/></svg>
    <span class="lang">ENG</span>
    <div class="clock ms-2 ps-1">8:26 AM<br>4/7/2025</div>
    <button class="plain notify" aria-label="Notifications"><svg width="20" height="21" viewBox="0 0 20 21"><path d="M0 0h20v16h-7l-4 5v-5H0z" fill="#fff"/><path d="M4 4.500h12M4 8h12M4 11.500h8" stroke="#383026"/></svg><span class="notify-count">5</span></button>
    <span class="peek"></span>
  </div>
</footer>
</body>
</html>
